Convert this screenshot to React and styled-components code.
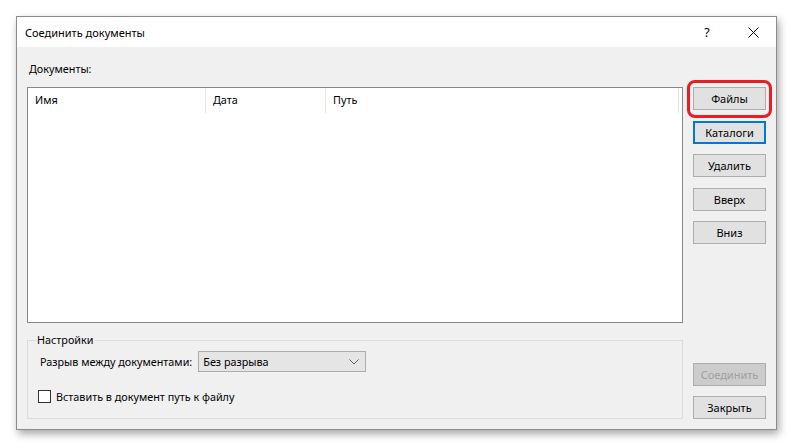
import React from 'react'
import styled, { createGlobalStyle } from 'styled-components'

const Global = createGlobalStyle`
  html, body { margin: 0; padding: 0; background: #ffffff; }
  body { font-family: "Noto Sans", "Open Sans", sans-serif; font-size: 10.8px; color: #000; }
  * { box-sizing: border-box; }
`

const Page = styled.div`
  width: 793px;
  height: 448px;
  padding: 16px 0 0 16px;
`

const Window = styled.div`
  width: 761px;
  height: 414px;
  border: 1px solid #8c8c8c;
  background: #f0f0f0;
  display: flex;
  flex-direction: column;
  box-shadow: 2px 4px 8px rgba(0, 0, 0, 0.35);
`

const TitleBar = styled.div`
  height: 30px;
  background: #ffffff;
  display: flex;
  align-items: center;
  padding-left: 8px;
`

const Title = styled.div`
  flex: 1;
  font-size: 11px;
`

const TitleButton = styled.div`
  width: 46px;
  height: 30px;
  display: flex;
  align-items: center;
  justify-content: center;
  font-size: 12.5px;
`

const Body = styled.div`
  flex: 1;
  display: flex;
  padding: 13px 10px 10px 10px;
  gap: 10px;
`

const LeftColumn = styled.div`
  width: 656px;
  display: flex;
  flex-direction: column;
`

const Label = styled.div`
  padding-left: 2px;
  height: 27px;
  line-height: 18px;
`

const ListBox = styled.div`
  height: 236px;
  background: #ffffff;
  border: 1px solid #828790;
`

const HeaderRow = styled.div`
  display: flex;
  height: 25px;
`

const HeaderCell = styled.div`
  width: ${p => p.$w}px;
  padding-left: 7px;
  line-height: 24px;
  border-right: 1px solid #e5e5e5;
`

const Group = styled.fieldset`
  margin: 11px 0 0 0;
  height: 85px;
  border: 1px solid #dcdcdc;
  padding: 0 0 0 10px;
  min-width: 0;
`

const Legend = styled.legend`
  padding: 0 1px;
  margin-left: -2px;
  line-height: 12px;
`

const FieldRow = styled.div`
  display: flex;
  align-items: center;
  gap: 6px;
  margin-top: 5px;
  padding-left: 2px;
`

const Select = styled.div`
  width: 168px;
  height: 21px;
  border: 1px solid #acacac;
  background: #e5e5e5;
  display: flex;
  align-items: center;
  justify-content: space-between;
  padding: 0 6px 0 4px;
`

const CheckRow = styled.div`
  display: flex;
  align-items: center;
  gap: 5px;
  margin-top: 17px;
`

const Checkbox = styled.div`
  width: 13px;
  height: 13px;
  border: 1px solid #333;
  background: #fff;
`

const RightColumn = styled.div`
  width: 73px;
  display: flex;
  flex-direction: column;
  justify-content: space-between;
  padding-top: 27px;
`

const ButtonStack = styled.div`
  display: flex;
  flex-direction: column;
  gap: ${p => p.$gap || 10}px;
`

const HighlightWrap = styled.div`
  position: relative;
`

const Highlight = styled.div`
  position: absolute;
  left: -6px;
  right: -6px;
  top: -7px;
  bottom: -8px;
  border: 3px solid #ea1c24;
  border-radius: 8px;
  pointer-events: none;
`

const Button = styled.div`
  height: 23px;
  border: ${p => (p.$focus ? '2px solid #0078d7' : '1px solid #adadad')};
  background: ${p => (p.$disabled ? '#cccccc' : '#e1e1e1')};
  color: ${p => (p.$disabled ? '#a0a0a0' : '#000')};
  display: flex;
  align-items: center;
  justify-content: center;
  font-size: 11px;
`

const Chevron = () => (
  <svg width="10" height="6" viewBox="0 0 10 6">
    <path d="M0.5 0.5 L5 5 L9.5 0.5" fill="none" stroke="#606060" strokeWidth="1" />
  </svg>
)

const CloseIcon = () => (
  <svg width="11" height="11" viewBox="0 0 11 11">
    <path d="M0.5 0.5 L10.5 10.5 M10.5 0.5 L0.5 10.5" stroke="#000" strokeWidth="1" />
  </svg>
)

export default function App() {
  return (
    <Page>
      <Global />
      <Window>
        <TitleBar>
          <Title>Соединить документы</Title>
          <TitleButton>?</TitleButton>
          <TitleButton>
            <CloseIcon />
          </TitleButton>
        </TitleBar>
        <Body>
          <LeftColumn>
            <Label>Документы:</Label>
            <ListBox>
              <HeaderRow>
                <HeaderCell $w={178}>Имя</HeaderCell>
                <HeaderCell $w={120}>Дата</HeaderCell>
                <HeaderCell $w={353}>Путь</HeaderCell>
              </HeaderRow>
            </ListBox>
            <Group>
              <Legend>Настройки</Legend>
              <FieldRow>
                <span>Разрыв между документами:</span>
                <Select>
                  <span>Без разрыва</span>
                  <Chevron />
                </Select>
              </FieldRow>
              <CheckRow>
                <Checkbox />
                <span>Вставить в документ путь к файлу</span>
              </CheckRow>
            </Group>
          </LeftColumn>
          <RightColumn>
            <ButtonStack $gap={10.5}>
              <HighlightWrap>
                <Button>Файлы</Button>
                <Highlight />
              </HighlightWrap>
              <Button $focus>Каталоги</Button>
              <Button>Удалить</Button>
              <Button>Вверх</Button>
              <Button>Вниз</Button>
            </ButtonStack>
            <ButtonStack>
              <Button $disabled>Соединить</Button>
              <Button>Закрыть</Button>
            </ButtonStack>
          </RightColumn>
        </Body>
      </Window>
    </Page>
  )
}
